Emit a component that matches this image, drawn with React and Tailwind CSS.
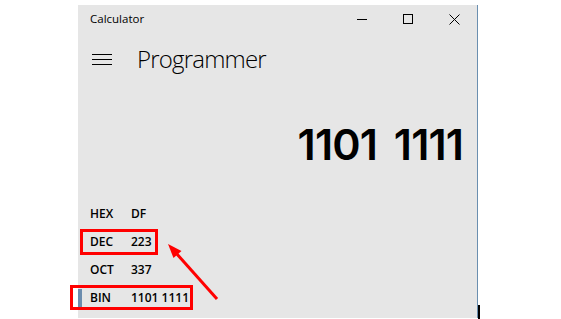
import React from "react";

const rows = [
  { label: "HEX", value: "DF" },
  { label: "DEC", value: "223", box: "dec" },
  { label: "OCT", value: "337" },
  { label: "BIN", value: "1101 1111", box: "bin", active: true },
];

export default function App() {
  return (
    <div
      className="relative w-[561px] h-[319px] bg-white overflow-hidden text-black"
      style={{ fontFamily: '"Open Sans", "Noto Sans", sans-serif' }}
    >
      <div className="pl-[78px] pt-[5px]">
        <div className="w-[400px] h-[313px] bg-[#e6e6e6] border-r border-[#6a8fb0] flex flex-col">
          {/* title bar */}
          <div className="h-[28px] flex items-center">
            <div className="pl-[12px] text-[11.5px] flex-1 leading-none">Calculator</div>
            <div className="flex h-full">
              <div className="w-[46px] h-full flex items-center justify-center">
                <div className="w-[10px] h-px bg-black" />
              </div>
              <div className="w-[46px] h-full flex items-center justify-center">
                <div className="w-[10px] h-[10px] border border-black" />
              </div>
              <div className="w-[46px] h-full flex items-center justify-center">
                <svg width="11" height="11" viewBox="0 0 11 11">
                  <path d="M0.5 0.5 L10.5 10.5 M10.5 0.5 L0.5 10.5" stroke="#000" strokeWidth="1" />
                </svg>
              </div>
            </div>
          </div>
          {/* header */}
          <div className="h-[52px] flex items-center">
            <div className="ml-[14px] w-[20px] flex flex-col gap-[4px]">
              <div className="h-px bg-black" />
              <div className="h-px bg-black" />
              <div className="h-px bg-black" />
            </div>
            <div className="ml-[25px] text-[24px] font-light leading-none tracking-[-0.8px]">Programmer</div>
          </div>
          {/* display */}
          <div className="h-[115px] flex items-start justify-end pr-[14px] pt-[38px]">
            <div
              className="text-[43px] font-semibold leading-none tracking-[-0.9px] [word-spacing:7px]"
              style={{ fontFamily: 'Inter, "Open Sans", sans-serif' }}
            >
              1101 1111
            </div>
          </div>
          {/* rows */}
          <div className="flex flex-col">
            {rows.map((r) => (
              <div key={r.label} className="relative h-[28px] flex items-center text-[12px] font-semibold">
                {r.active && <div className="absolute left-0 top-[5px] w-[4px] h-[18px] bg-[#6b8cae]" />}
                <div className="pl-[12px] w-[53px]">{r.label}</div>
                <div>{r.value}</div>
                {r.box === "dec" && (
                  <div className="absolute left-[2px] top-px w-[78px] h-[26px] border-[3px] border-[#ff0000]" />
                )}
                {r.box === "bin" && (
                  <div className="absolute left-[-8px] top-px w-[123px] h-[25px] border-[3px] border-[#ff0000]" />
                )}
              </div>
            ))}
          </div>
        </div>
      </div>
      <div className="absolute left-[478px] top-[305px] w-[2px] h-[14px] bg-black" />
      <svg className="absolute inset-0 pointer-events-none" width="561" height="319">
        <line x1="217" y1="299" x2="176" y2="253" stroke="#ff0000" strokeWidth="3" />
        <polygon points="168,244 181.5,251 173.5,258" fill="#ff0000" />
      </svg>
    </div>
  );
}
